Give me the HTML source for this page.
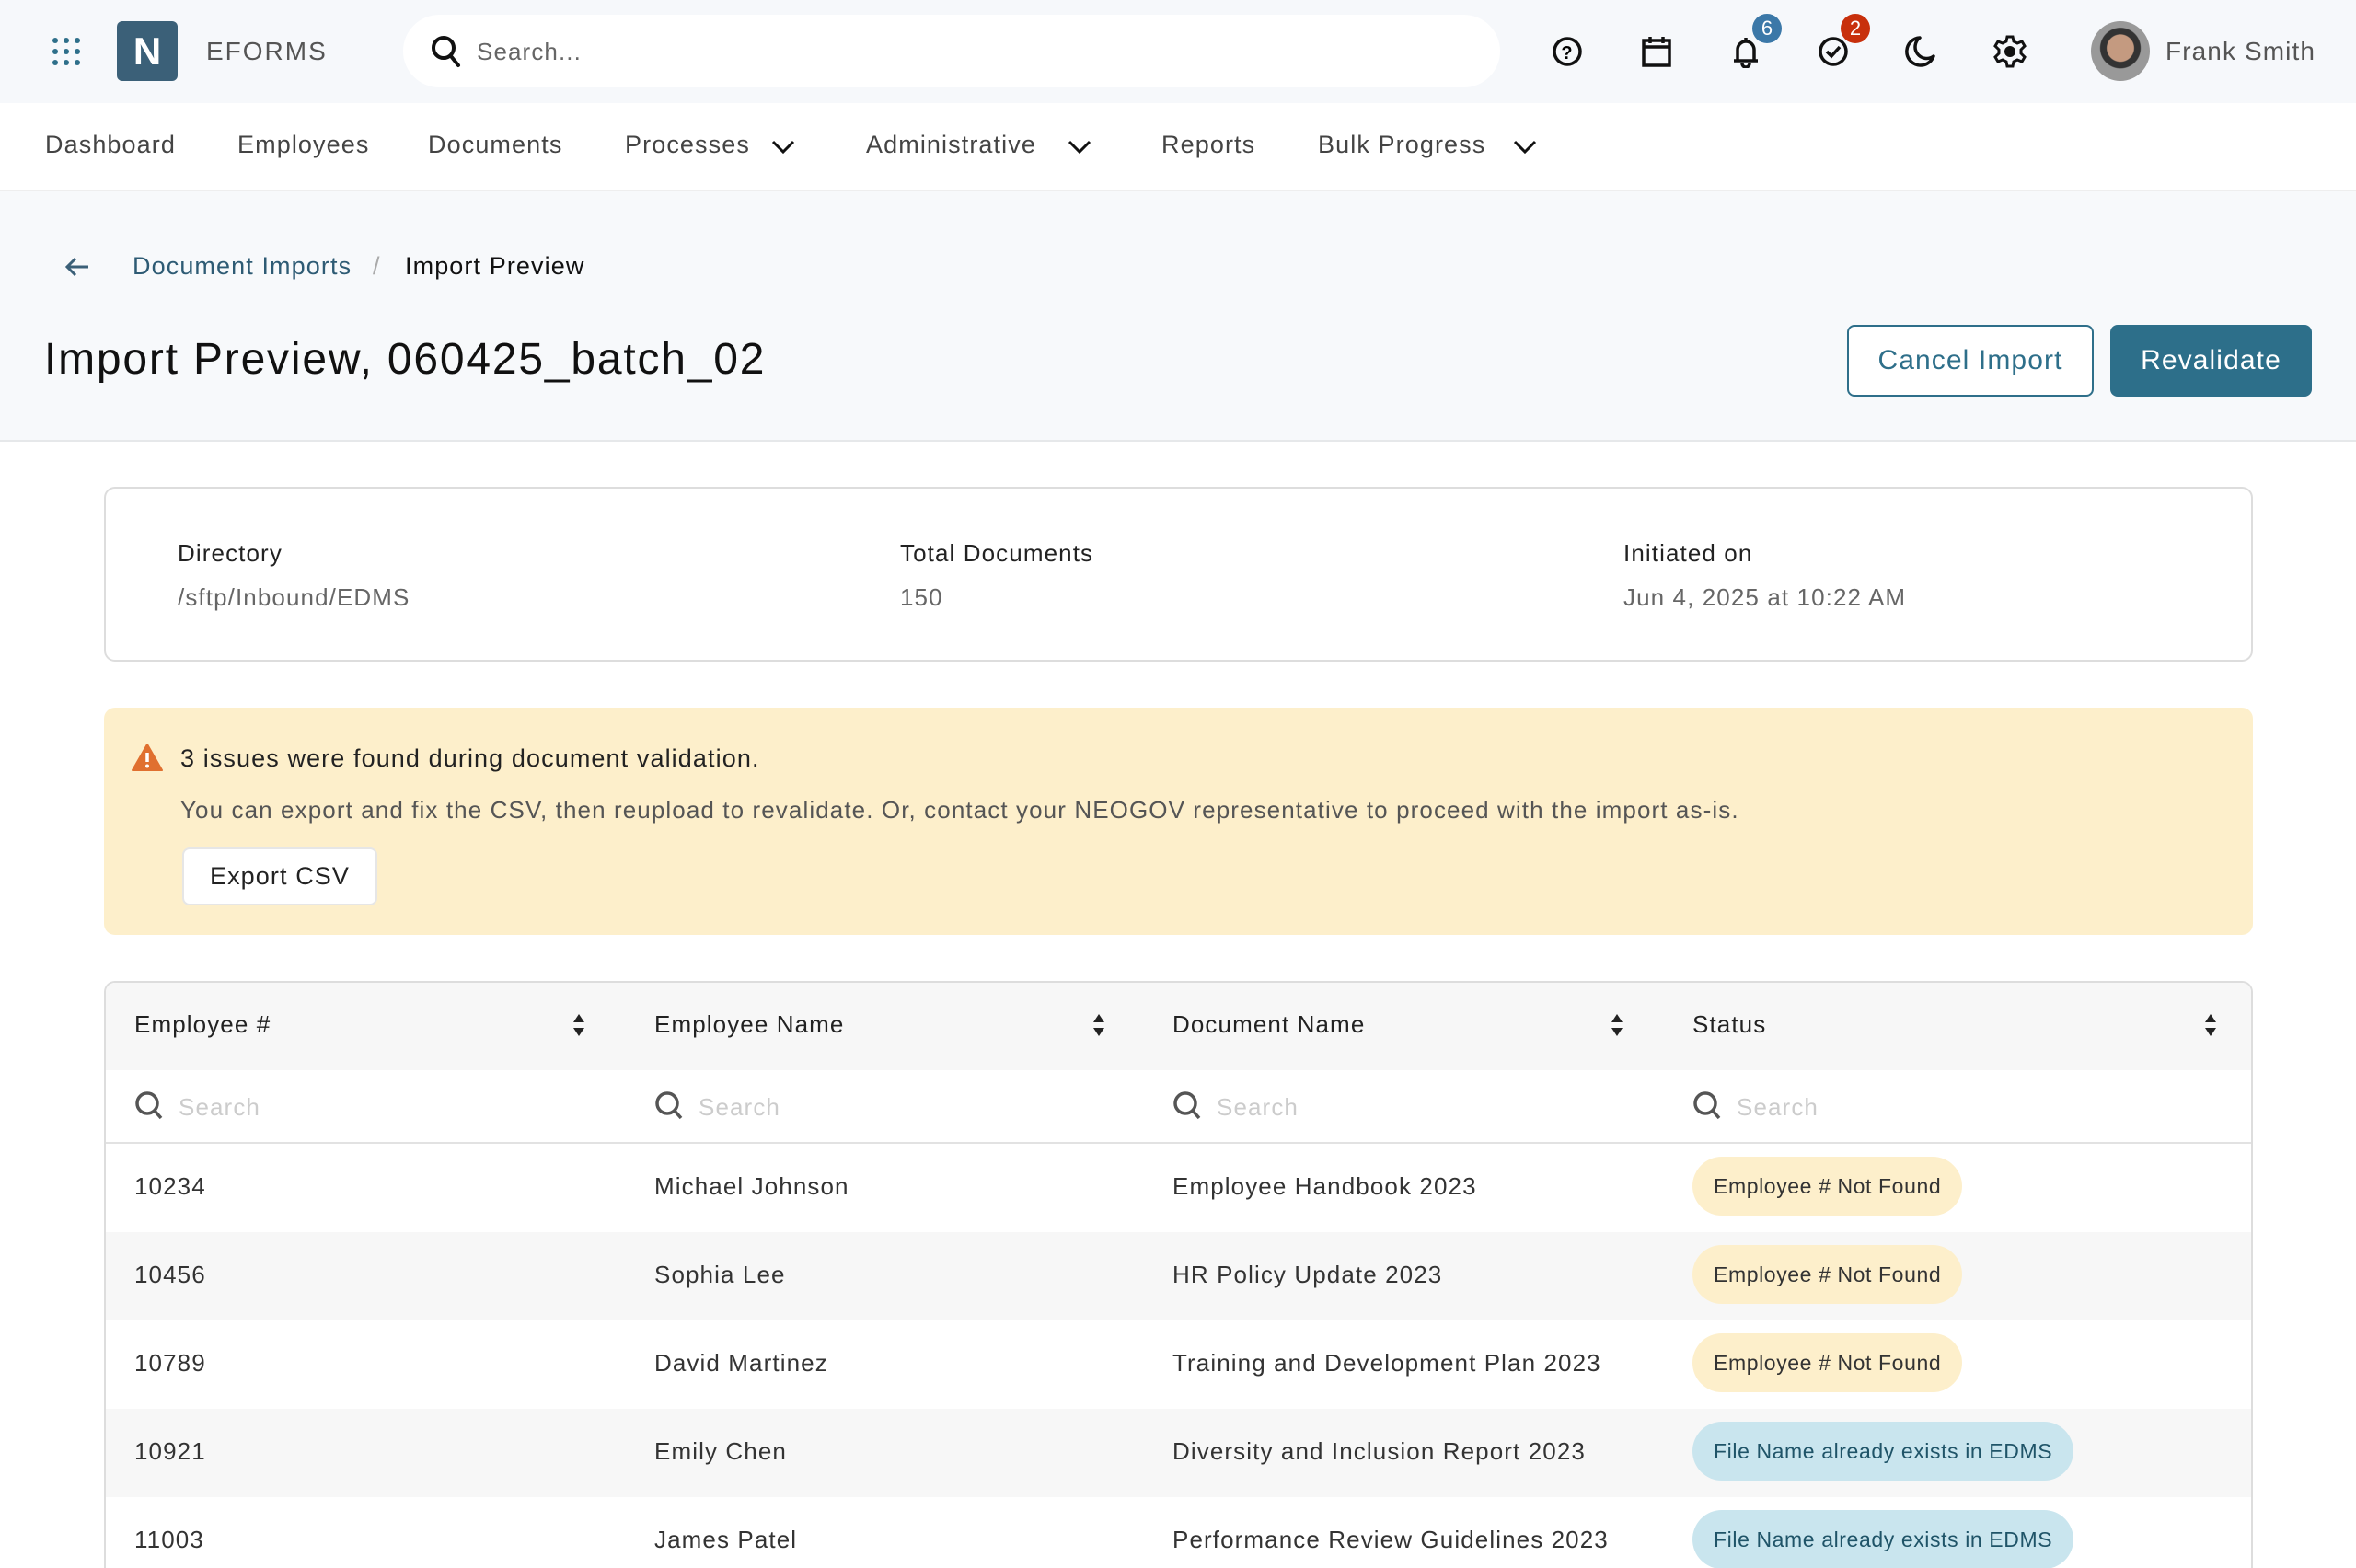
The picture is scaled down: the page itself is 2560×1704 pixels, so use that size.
<!DOCTYPE html>
<html style="width:2560px;height:1704px;overflow:hidden"><head><meta charset="utf-8"><style>
*{box-sizing:border-box;margin:0;padding:0}
body{width:2560px;height:1704px;overflow:hidden;font-family:"Liberation Sans",sans-serif;background:#fff;color:#222;position:relative;letter-spacing:1.1px}
.a{position:absolute;white-space:nowrap}
.top{position:absolute;left:0;top:0;width:2560px;height:112px;background:#f6f8fb}
.nav{position:absolute;left:0;top:112px;width:2560px;height:96px;background:#fff;border-bottom:2px solid #eee}
.nav span{position:absolute;top:30px;font-size:27px;color:#444}
.ph{position:absolute;left:0;top:208px;width:2560px;height:272px;background:#f7f9fb;border-bottom:2px solid #e6e8ea}
.card{position:absolute;left:113px;top:529px;width:2335px;height:190px;border:2px solid #ddd;border-radius:12px;background:#fff}
.lbl{font-size:26px;color:#222}
.val{font-size:26px;color:#666}
.warn{position:absolute;left:113px;top:769px;width:2335px;height:247px;background:#fdefcb;border-radius:12px}
.tbl{position:absolute;left:113px;top:1066px;width:2335px;height:660px;border:2px solid #ddd;border-radius:12px;overflow:hidden;background:#fff}
.hr{position:absolute;left:0;top:0;width:100%;height:95px;background:#f7f7f7}
.sr{position:absolute;left:0;top:95px;width:100%;height:80px;background:#fff;border-bottom:2px solid #e2e2e2}
.row{position:absolute;left:0;width:100%;height:96px}
.row.s{background:#f7f7f7}
.c{position:absolute;top:31px;font-size:26px;color:#333}
.h{position:absolute;top:30px;font-size:26px;color:#222}
.ph2{position:absolute;top:25px;font-size:26px;color:#ccc}
.b{position:absolute;top:16px;height:64px;border-radius:32px;padding:0 23px;font-size:23px;line-height:64px;letter-spacing:0.6px}
.y{background:#fdefcb;color:#333}
.bl{background:#c9e5ee;color:#1f5468}
</style></head><body>
<div class="top"></div>
<svg class="a" style="left:56px;top:40px" width="32" height="32" viewBox="0 0 32 32" fill="#2e6f8a"><circle cx="4" cy="4" r="3"/><circle cx="16" cy="4" r="3"/><circle cx="28" cy="4" r="3"/><circle cx="4" cy="16" r="3"/><circle cx="16" cy="16" r="3"/><circle cx="28" cy="16" r="3"/><circle cx="4" cy="28" r="3"/><circle cx="16" cy="28" r="3"/><circle cx="28" cy="28" r="3"/></svg>
<div class="a" style="left:127px;top:23px;width:66px;height:65px;background:#3b6078;border-radius:6px;color:#fff;font-size:42px;font-weight:bold;text-align:center;line-height:65px;letter-spacing:0">N</div>
<div class="a" style="left:224px;top:40px;font-size:28px;color:#555;letter-spacing:2px">EFORMS</div>
<div class="a" style="left:438px;top:16px;width:1192px;height:79px;background:#fff;border-radius:40px"></div>
<svg class="a" style="left:468px;top:38px" width="34" height="36" viewBox="0 0 34 36"><circle cx="14" cy="14" r="11" fill="none" stroke="#111" stroke-width="4"/><path d="M22 23l8 10" stroke="#111" stroke-width="4" stroke-linecap="round"/></svg>
<div class="a" style="left:518px;top:41px;font-size:26px;color:#666">Search...</div>
<svg class="a" style="left:1686px;top:39px" width="34" height="34" viewBox="0 0 34 34"><circle cx="17" cy="17" r="14" fill="none" stroke="#111" stroke-width="3.5"/><text x="17" y="25" font-size="20" font-weight="bold" text-anchor="middle" font-family="Liberation Sans">?</text></svg>
<svg class="a" style="left:1783px;top:38px" width="34" height="36" viewBox="0 0 34 36"><rect x="3" y="6" width="28" height="27" fill="none" stroke="#111" stroke-width="3.5"/><path d="M3 13h28M10 2v7M24 2v7" stroke="#111" stroke-width="3.5"/></svg>
<svg class="a" style="left:1880px;top:38px" width="34" height="36" viewBox="0 0 34 36"><path d="M17 3v3M8 27V16a9 9 0 0118 0v11M4 28h26M13 31a4 4 0 008 0" fill="none" stroke="#111" stroke-width="3.5"/></svg>
<div class="a" style="left:1904px;top:15px;width:32px;height:32px;border-radius:16px;background:#3b78a8;color:#fff;font-size:22px;text-align:center;line-height:32px;letter-spacing:0">6</div>
<svg class="a" style="left:1975px;top:38px" width="34" height="36" viewBox="0 0 34 36"><circle cx="17" cy="18" r="14" fill="none" stroke="#111" stroke-width="3.5"/><path d="M10 18l5 5 9-10" fill="none" stroke="#111" stroke-width="3.5"/></svg>
<div class="a" style="left:2000px;top:15px;width:32px;height:32px;border-radius:16px;background:#c8300c;color:#fff;font-size:22px;text-align:center;line-height:32px;letter-spacing:0">2</div>
<svg class="a" style="left:2070px;top:38px" width="34" height="36" viewBox="0 0 34 36"><path d="M16 3a15 15 0 1015 20A12 12 0 0116 3z" fill="none" stroke="#111" stroke-width="3.5" stroke-linejoin="round"/></svg>
<svg class="a" style="left:2166px;top:38px" width="36" height="36" viewBox="0 0 36 36"><path d="M15 2h6l1 5 4 2 5-2 3 5-4 4v4l4 4-3 5-5-2-4 2-1 5h-6l-1-5-4-2-5 2-3-5 4-4v-4l-4-4 3-5 5 2 4-2z" fill="none" stroke="#111" stroke-width="3"/><circle cx="18" cy="18" r="6" fill="#111"/></svg>
<div class="a" style="left:2272px;top:23px;width:64px;height:65px;border-radius:50%;background:radial-gradient(circle at 50% 45%,#c49a80 0 30%,#333 32% 45%,#999 47%)"></div>
<div class="a" style="left:2353px;top:40px;font-size:28px;color:#555">Frank Smith</div>

<div class="nav">
<span style="left:49px">Dashboard</span><span style="left:258px">Employees</span><span style="left:465px">Documents</span><span style="left:679px">Processes</span><span style="left:941px">Administrative</span><span style="left:1262px">Reports</span><span style="left:1432px">Bulk Progress</span>
<svg class="a" style="left:838px;top:40px" width="26" height="16"><path d="M2 2l11 11 11-11" fill="none" stroke="#111" stroke-width="3"/></svg>
<svg class="a" style="left:1160px;top:40px" width="26" height="16"><path d="M2 2l11 11 11-11" fill="none" stroke="#111" stroke-width="3"/></svg>
<svg class="a" style="left:1644px;top:40px" width="26" height="16"><path d="M2 2l11 11 11-11" fill="none" stroke="#111" stroke-width="3"/></svg>
</div>

<div class="ph">
<svg class="a" style="left:70px;top:70px" width="28" height="24"><path d="M26 12H4M12 3l-9 9 9 9" fill="none" stroke="#3b6078" stroke-width="3"/></svg>
<div class="a" style="left:144px;top:66px;font-size:27px;color:#2e5b74">Document Imports</div>
<div class="a" style="left:405px;top:66px;font-size:27px;color:#aaa">/</div>
<div class="a" style="left:440px;top:66px;font-size:27px;color:#111">Import Preview</div>
<div class="a" style="left:48px;top:155px;font-size:48px;color:#111;letter-spacing:1.8px">Import Preview, 060425_batch_02</div>
<div class="a" style="left:2007px;top:145px;width:268px;height:78px;border:2px solid #2e6f8a;border-radius:8px;background:#fff;color:#2e6f8a;font-size:30px;text-align:center;line-height:74px">Cancel Import</div>
<div class="a" style="left:2293px;top:145px;width:219px;height:78px;border-radius:8px;background:#2d6f8a;color:#fff;font-size:30px;text-align:center;line-height:78px">Revalidate</div>
</div>

<div class="card">
<div class="a lbl" style="left:78px;top:55px">Directory</div><div class="a val" style="left:78px;top:103px">/sftp/Inbound/EDMS</div>
<div class="a lbl" style="left:863px;top:55px">Total Documents</div><div class="a val" style="left:863px;top:103px">150</div>
<div class="a lbl" style="left:1649px;top:55px">Initiated on</div><div class="a val" style="left:1649px;top:103px">Jun 4, 2025 at 10:22 AM</div>
</div>

<div class="warn">
<svg class="a" style="left:30px;top:38px" width="34" height="32" viewBox="0 0 34 32"><path d="M17 2L33 30H1z" fill="#e07030" stroke="#e07030" stroke-width="2" stroke-linejoin="round"/><path d="M17 11v10" stroke="#fff" stroke-width="3.5"/><circle cx="17" cy="25.5" r="2" fill="#fff"/></svg>
<div class="a" style="left:83px;top:40px;font-size:27px;color:#222">3 issues were found during document validation.</div>
<div class="a" style="left:83px;top:96px;font-size:26px;color:#555">You can export and fix the CSV, then reupload to revalidate. Or, contact your NEOGOV representative to proceed with the import as-is.</div>
<div class="a" style="left:85px;top:152px;width:212px;height:63px;background:#fff;border:2px solid #e6e6e6;border-radius:8px;font-size:27px;color:#222;text-align:center;line-height:59px">Export CSV</div>
</div>

<div class="tbl">
<div class="hr">
<div class="h" style="left:31px">Employee #</div><div class="h" style="left:596px">Employee Name</div><div class="h" style="left:1159px">Document Name</div><div class="h" style="left:1724px">Status</div>
<svg class="a" style="left:506px;top:32px" width="16" height="28"><path d="M8 2l6 9H2zM8 26l6-9H2z" fill="#222"/></svg>
<svg class="a" style="left:1071px;top:32px" width="16" height="28"><path d="M8 2l6 9H2zM8 26l6-9H2z" fill="#222"/></svg>
<svg class="a" style="left:1634px;top:32px" width="16" height="28"><path d="M8 2l6 9H2zM8 26l6-9H2z" fill="#222"/></svg>
<svg class="a" style="left:2279px;top:32px" width="16" height="28"><path d="M8 2l6 9H2zM8 26l6-9H2z" fill="#222"/></svg>
</div>
<div class="sr">
<svg class="a" style="left:31px;top:22px" width="34" height="34" viewBox="0 0 34 34"><circle cx="14" cy="14" r="11" fill="none" stroke="#555" stroke-width="3.5"/><path d="M22 22l7 8" stroke="#555" stroke-width="3.5"/></svg><div class="ph2" style="left:79px">Search</div>
<svg class="a" style="left:596px;top:22px" width="34" height="34" viewBox="0 0 34 34"><circle cx="14" cy="14" r="11" fill="none" stroke="#555" stroke-width="3.5"/><path d="M22 22l7 8" stroke="#555" stroke-width="3.5"/></svg><div class="ph2" style="left:644px">Search</div>
<svg class="a" style="left:1159px;top:22px" width="34" height="34" viewBox="0 0 34 34"><circle cx="14" cy="14" r="11" fill="none" stroke="#555" stroke-width="3.5"/><path d="M22 22l7 8" stroke="#555" stroke-width="3.5"/></svg><div class="ph2" style="left:1207px">Search</div>
<svg class="a" style="left:1724px;top:22px" width="34" height="34" viewBox="0 0 34 34"><circle cx="14" cy="14" r="11" fill="none" stroke="#555" stroke-width="3.5"/><path d="M22 22l7 8" stroke="#555" stroke-width="3.5"/></svg><div class="ph2" style="left:1772px">Search</div>
</div>
<div class="row" style="top:175px"><div class="c" style="left:31px">10234</div><div class="c" style="left:596px">Michael Johnson</div><div class="c" style="left:1159px">Employee Handbook 2023</div><div class="b y" style="left:1724px;top:14px">Employee # Not Found</div></div>
<div class="row s" style="top:271px"><div class="c" style="left:31px">10456</div><div class="c" style="left:596px">Sophia Lee</div><div class="c" style="left:1159px">HR Policy Update 2023</div><div class="b y" style="left:1724px;top:14px">Employee # Not Found</div></div>
<div class="row" style="top:367px"><div class="c" style="left:31px">10789</div><div class="c" style="left:596px">David Martinez</div><div class="c" style="left:1159px">Training and Development Plan 2023</div><div class="b y" style="left:1724px;top:14px">Employee # Not Found</div></div>
<div class="row s" style="top:463px"><div class="c" style="left:31px">10921</div><div class="c" style="left:596px">Emily Chen</div><div class="c" style="left:1159px">Diversity and Inclusion Report 2023</div><div class="b bl" style="left:1724px;top:14px">File Name already exists in EDMS</div></div>
<div class="row" style="top:559px"><div class="c" style="left:31px">11003</div><div class="c" style="left:596px">James Patel</div><div class="c" style="left:1159px">Performance Review Guidelines 2023</div><div class="b bl" style="left:1724px;top:14px">File Name already exists in EDMS</div></div>
</div>
</body></html>
